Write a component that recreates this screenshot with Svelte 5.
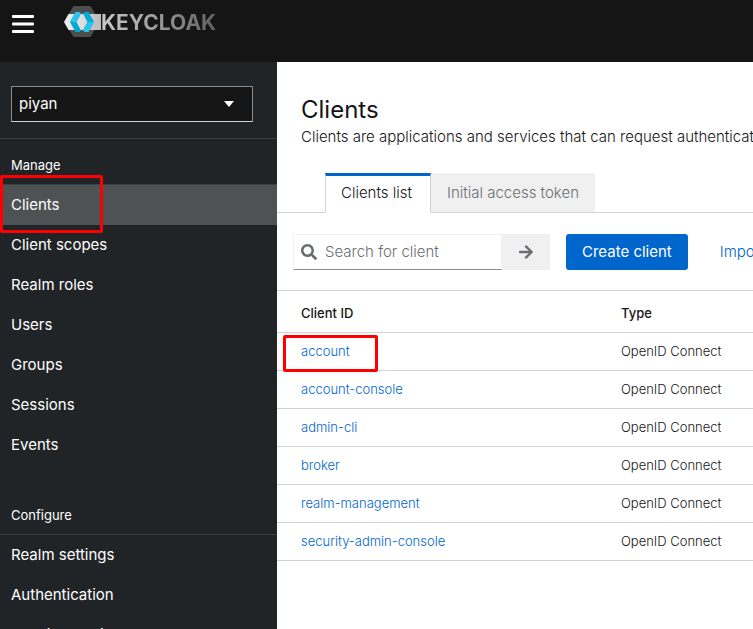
<script>
  let realm = $state('piyan');
  let search = $state('');

  const sections = [
    {
      title: 'Manage',
      items: ['Clients', 'Client scopes', 'Realm roles', 'Users', 'Groups', 'Sessions', 'Events']
    },
    {
      title: 'Configure',
      items: ['Realm settings', 'Authentication', 'Identity providers', 'User federation']
    }
  ];

  const clients = [
    'account',
    'account-console',
    'admin-cli',
    'broker',
    'realm-management',
    'security-admin-console'
  ];
</script>

<div class="page">
  <header>
    <button class="burger" aria-label="Global navigation">
      <svg width="22" height="20" viewBox="0 0 22 20" fill="#fff">
        <rect x="0" y="1" width="22" height="3" rx="1" />
        <rect x="0" y="8.500" width="22" height="3" rx="1" />
        <rect x="0" y="16" width="22" height="3" rx="1" />
      </svg>
    </button>
    <a class="brand" href="#home" aria-label="Keycloak">
      <svg width="37" height="32" viewBox="0 0 37 32">
        <defs>
          <linearGradient id="plate" x1="0" x2="1" y1="0" y2="0">
            <stop offset="0" stop-color="#f0f0f0" />
            <stop offset="0.6" stop-color="#d8d8d8" />
            <stop offset="1" stop-color="#c0c0c0" />
          </linearGradient>
        </defs>
        <path d="M9.500 0h17L33 11v9l-6.500 11h-17L3 20v-9z" fill="#4d4d4d" />
        <path d="M4.500 8H37v16H4.500L0 16z" fill="url(#plate)" />
        <path d="M18 24 30 8h7v16z" fill="#b4b4b4" opacity="0.35" />
        <path d="M11.500 6H15l2 1.500L12.500 16l4.500 8.500-2 1.500h-3.500L6 16z" fill="#00a9d6" />
        <path d="M11.500 6H15l2 1.500L12.500 16H6z" fill="#2cc3ea" />
        <path d="M21 6h3.500L30 16l-5.500 10H21l-2-1.500 4.500-8.500L19 7.500z" fill="#00a9d6" />
        <path d="M30 16l-5.500 10H21l-2-1.500 4.500-8.500z" fill="#2cc3ea" />
      </svg>
      <span>KEYCLOAK</span>
    </a>
  </header>

  <div class="body">
    <nav aria-label="Realm">
      <div class="realm">
        <select bind:value={realm} aria-label="Realm">
          <option>piyan</option>
          <option>master</option>
        </select>
        <svg width="10" height="6" viewBox="0 0 10 6"><path d="M0 0h10L5 6z" fill="#fff" /></svg>
      </div>
      {#each sections as section}
        <section>
          <h2>{section.title}</h2>
          <ul>
            {#each section.items as item}
              <li class:active={item === 'Clients'}><a href="#nav">{item}</a></li>
            {/each}
          </ul>
        </section>
      {/each}
    </nav>

    <main>
      <div class="intro">
        <h1>Clients</h1>
        <p>Clients are applications and services that can request authentication of a user.</p>
      </div>

      <div class="tabs" role="tablist">
        <button role="tab" aria-selected="true">Clients list</button>
        <button role="tab" aria-selected="false">Initial access token</button>
      </div>

      <div class="toolbar">
        <form class="search" onsubmit={(e) => e.preventDefault()}>
          <label>
            <svg width="16" height="16" viewBox="0 0 512 512" fill="#6a6e73"><path d="M505 442.700L405.300 343c-4.500-4.500-10.600-7-17-7H372c27.600-35.300 44-79.700 44-128C416 93.100 322.900 0 208 0S0 93.100 0 208s93.100 208 208 208c48.300 0 92.700-16.400 128-44v16.300c0 6.400 2.500 12.500 7 17l99.700 99.700c9.400 9.400 24.600 9.400 33.900 0l28.300-28.300c9.400-9.400 9.400-24.600.1-34zM208 336c-70.700 0-128-57.200-128-128 0-70.700 57.200-128 128-128 70.700 0 128 57.200 128 128 0 70.700-57.200 128-128 128z" /></svg>
            <input bind:value={search} type="text" placeholder="Search for client" aria-label="Search for client" />
          </label>
          <button aria-label="Search">
            <svg width="14" height="16" viewBox="0 0 448 512" fill="#6a6e73"><path d="M190.500 66.900l22.200-22.200c9.400-9.400 24.600-9.400 33.900 0L441 239c9.400 9.400 9.400 24.600 0 33.900L246.600 467.300c-9.400 9.400-24.600 9.400-33.900 0l-22.200-22.200c-9.500-9.500-9.300-25 .4-34.300L311.400 296H24c-13.300 0-24-10.700-24-24v-32c0-13.300 10.700-24 24-24h287.400L190.900 101.200c-9.800-9.300-10-24.800-.4-34.300z" /></svg>
          </button>
        </form>
        <button class="create">Create client</button>
        <a class="import" href="#import">Import client</a>
      </div>

      <table>
        <thead>
          <tr><th scope="col">Client ID</th><th scope="col">Type</th></tr>
        </thead>
        <tbody>
          {#each clients as client}
            <tr>
              <td><a href="#client" class:marked={client === 'account'}>{client}</a></td>
              <td>OpenID Connect</td>
            </tr>
          {/each}
        </tbody>
      </table>
    </main>
  </div>
</div>

<style>
  :global(body) {
    margin: 0;
  }
  .page {
    display: flex;
    flex-direction: column;
    height: 100vh;
    overflow: hidden;
    background: #fff;
    color: #151515;
    font: 300 15px/24px Inter, 'Open Sans', sans-serif;
  }
  .page *,
  .page *::after {
    box-sizing: border-box;
  }
  button,
  input,
  select {
    font: inherit;
    color: inherit;
    border: 0;
    margin: 0;
    padding: 0;
    background: none;
    border-radius: 0;
  }
  a {
    color: #06c;
    text-decoration: none;
  }
  svg {
    display: block;
    flex: none;
  }

  header {
    flex: none;
    display: flex;
    align-items: flex-start;
    gap: 30px;
    height: 62px;
    padding: 6px 12px;
    background: #151515;
  }
  .burger {
    padding-top: 8px;
  }
  .brand {
    display: flex;
    align-items: center;
  }
  .brand span {
    font: 700 21px/34px Inter, sans-serif;
    color: transparent;
    background: linear-gradient(90deg, #c8c8c8, #a0a0a0 45%, #606060);
    background-clip: text;
    -webkit-background-clip: text;
  }
  .brand svg {
    align-self: flex-start;
  }

  .body {
    flex: 1;
    display: flex;
    min-height: 0;
  }
  nav {
    flex: none;
    width: 277px;
    overflow-y: auto;
    scrollbar-width: none;
    background: #212427;
    color: #fff;
    font-weight: 400;
  }
  .realm {
    display: flex;
    align-items: center;
    padding: 24px 24px 16px 11px;
    border-bottom: 1px solid #3c3f42;
  }
  .realm select {
    flex: 1;
    height: 36px;
    padding: 0 7px;
    border: 1px solid #8a8d90;
    border-bottom-color: #d2d2d2;
    background: #151515;
    appearance: none;
  }
  .realm svg {
    margin-left: -29px;
    margin-right: 19px;
    pointer-events: none;
  }
  h2 {
    margin: 0;
    padding: 16px 11px 9px;
    border-bottom: 1px solid #3c3f42;
    font-size: 13px;
    line-height: 20px;
    font-weight: 400;
  }
  section + section h2 {
    padding-top: 40px;
  }
  ul {
    list-style: none;
    margin: 0;
    padding: 0;
  }
  li a {
    display: block;
    padding: 8px 11px;
    color: #fff;
  }
  li.active a {
    position: relative;
    background: #4f5255;
  }
  li.active a::after {
    content: '';
    position: absolute;
    top: -10px;
    left: 0;
    width: 103px;
    height: 58px;
    border: 3px solid #f00;
    border-radius: 2px;
  }

  main {
    flex: 1;
    min-width: 0;
    overflow: hidden;
  }
  .intro {
    padding: 32px 24px 24px;
    white-space: nowrap;
  }
  h1 {
    margin: 0;
    font-size: 24px;
    line-height: 31px;
    font-weight: 400;
  }
  p {
    margin: 0;
  }
  .tabs {
    display: flex;
    padding-left: 48px;
    background: linear-gradient(#d2d2d2, #d2d2d2) bottom / 100% 1px no-repeat;
  }
  .tabs button {
    height: 40px;
    padding: 0 16px;
    background: #f0f0f0;
    border-bottom: 1px solid #d2d2d2;
    color: #6a6e73;
  }
  .tabs button[aria-selected='true'] {
    min-width: 106px;
    padding: 0 15px 2px;
    background: #fff;
    border: 1px solid #d2d2d2;
    border-top: 3px solid #06c;
    border-bottom-color: #fff;
    color: #151515;
    text-align: left;
  }
  .toolbar {
    display: flex;
    align-items: center;
    gap: 16px;
    padding: 21px 16px 20px;
    white-space: nowrap;
  }
  .search {
    flex: none;
    display: flex;
    height: 36px;
  }
  .search label {
    display: flex;
    align-items: center;
    gap: 8px;
    width: 209px;
    padding: 0 7px;
    border: 1px solid #f0f0f0;
    border-bottom-color: #8a8d90;
  }
  .search input {
    flex: 1;
    min-width: 0;
    outline: 0;
  }
  .search input::placeholder {
    color: #6a6e73;
    opacity: 1;
  }
  .search button {
    display: flex;
    align-items: center;
    justify-content: center;
    width: 48px;
    background: #f0f0f0;
  }
  .create {
    flex: none;
    height: 36px;
    padding: 0 16px;
    border-radius: 3px;
    background: #06c;
    color: #fff;
    font-weight: 400;
  }
  .import {
    padding: 0 16px;
  }

  table {
    width: 100%;
    border-collapse: collapse;
    border-top: 1px solid #d2d2d2;
    font-size: 13px;
    line-height: 20px;
    white-space: nowrap;
  }
  th,
  td {
    padding: 8px 0 9px 24px;
    border-bottom: 1px solid #d2d2d2;
    text-align: left;
  }
  th {
    padding: 12px 0 9px 24px;
    font-weight: 500;
  }
  th:first-child {
    width: 320px;
  }
  .marked {
    position: relative;
  }
  .marked::after {
    content: '';
    position: absolute;
    top: -8px;
    left: -18px;
    width: 95px;
    height: 37px;
    border: 3px solid #f00;
    border-radius: 2px;
  }
</style>
